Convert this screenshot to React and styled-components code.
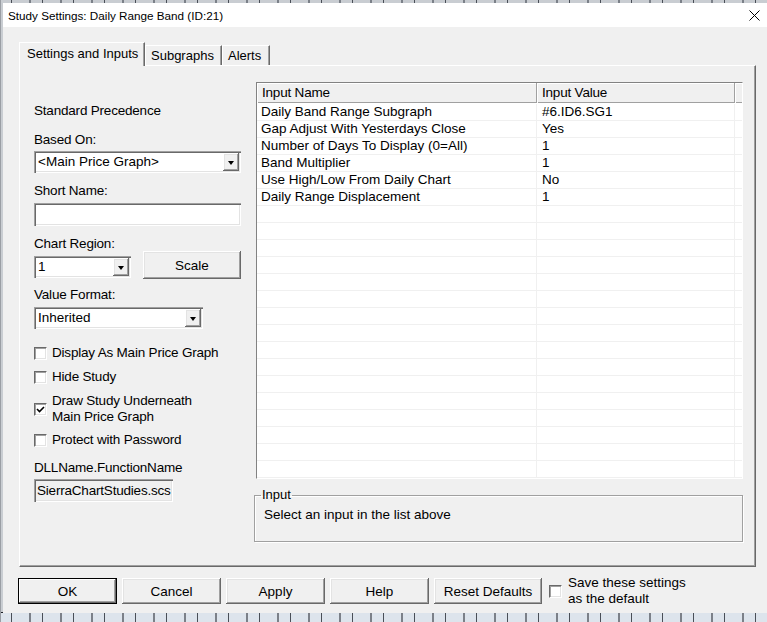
import React from 'react';
import styled, { createGlobalStyle } from 'styled-components';

const inputs = [
  ['Daily Band Range Subgraph', '#6.ID6.SG1'],
  ['Gap Adjust With Yesterdays Close', 'Yes'],
  ['Number of Days To Display (0=All)', '1'],
  ['Band Multiplier', '1'],
  ['Use High/Low From Daily Chart', 'No'],
  ['Daily Range Displacement', '1'],
];

const emptyRows = Array.from({ length: 18 }, () => ['', '']);

const App = () => (
  <Screen>
    <GlobalStyle />
    <Window>
      <TitleBar>
        <Title>Study Settings: Daily Range Band (ID:21)</Title>
        <Close viewBox="0 0 11 11" width="11" height="11">
          <path d="M0.5 0.5 L10.5 10.5 M10.5 0.5 L0.5 10.5" stroke="#000" strokeWidth="1" fill="none" />
        </Close>
      </TitleBar>
      <Body>
        <Tabs>
          <Tab active width={126}>Settings and Inputs</Tab>
          <Tab width={77}>Subgraphs</Tab>
          <Tab width={48}>Alerts</Tab>
        </Tabs>
        <Panel>
          <LeftCol>
            <Label mt={21}>Standard Precedence</Label>
            <Label mt={13}>Based On:</Label>
            <Select mt={3} width={207}>
              <SelectText>&lt;Main Price Graph&gt;</SelectText>
              <DropButton><Arrow /></DropButton>
            </Select>
            <Label mt={10}>Short Name:</Label>
            <TextBox mt={4} width={207} />
            <Label mt={10}>Chart Region:</Label>
            <Row>
              <Select mt={5} width={97}>
                <SelectText>1</SelectText>
                <DropButton><Arrow /></DropButton>
              </Select>
              <Button width={98} height={28}>Scale</Button>
            </Row>
            <Label mt={8}>Value Format:</Label>
            <Select mt={4} width={169}>
              <SelectText>Inherited</SelectText>
              <DropButton><Arrow /></DropButton>
            </Select>
            <Check mt={16}><Box /><span>Display As Main Price Graph</span></Check>
            <Check mt={8}><Box /><span>Hide Study</span></Check>
            <Check mt={8}>
              <Box><Tick viewBox="0 0 9 9" width="9" height="9"><path d="M1 4 L3.5 6.5 L8 2" stroke="#000" strokeWidth="1.6" fill="none" /></Tick></Box>
              <span>Draw Study Underneath<br />Main Price Graph</span>
            </Check>
            <Check mt={7}><Box /><span>Protect with Password</span></Check>
            <Label mt={12}>DLLName.FunctionName</Label>
            <TextBox mt={3} width={139} readOnlyLook>SierraChartStudies.scs</TextBox>
          </LeftCol>
          <RightCol>
            <Table>
              <HeadRow>
                <HeadCell>Input Name</HeadCell>
                <HeadCell>Input Value</HeadCell>
                <HeadCell />
              </HeadRow>
              <Rows>
                {[...inputs, ...emptyRows].map(([name, value], i) => (
                  <DataRow key={i}>
                    <Cell pad={4}>{name}</Cell>
                    <Cell pad={5}>{value}</Cell>
                    <Cell />
                  </DataRow>
                ))}
              </Rows>
            </Table>
            <Group>
              <Legend>Input</Legend>
              <GroupText>Select an input in the list above</GroupText>
            </Group>
          </RightCol>
        </Panel>
        <Footer>
          <Button width={99} height={26} isDefault>OK</Button>
          <Button width={99} height={26}>Cancel</Button>
          <Button width={99} height={26}>Apply</Button>
          <Button width={99} height={26}>Help</Button>
          <Button width={108} height={26}>Reset Defaults</Button>
          <FooterCheck><Box /><span>Save these settings<br />as the default</span></FooterCheck>
        </Footer>
      </Body>
    </Window>
  </Screen>
);

export default App;

const GlobalStyle = createGlobalStyle`
  html, body { margin:0; padding:0; }
  body {
    width:767px; height:622px; overflow:hidden;
    font-family:"Liberation Sans", Arial, sans-serif; font-size:13.5px; color:#000;
  }
`;

const sunken = `
  box-shadow: inset 1px 1px 0 #a0a0a0, inset 2px 2px 0 #696969, inset -1px -1px 0 #fff, inset -2px -2px 0 #e3e3e3;
`;
const raised = `
  box-shadow: inset -1px -1px 0 #696969, inset 1px 1px 0 #fff, inset -2px -2px 0 #a0a0a0, inset 2px 2px 0 #e3e3e3;
`;

const Screen = styled.div`
  width:767px; height:622px; box-sizing:border-box;
  padding:3px 0 9px 3px; display:flex;
  background:
    repeating-linear-gradient(90deg, transparent 0 11px, #4a4f57 11px 12px, transparent 12px 29px, #7b8088 29px 31px),
    linear-gradient(90deg, #9a9ea4 0 1px, transparent 1px),
    linear-gradient(#c9cdd2, #c9cdd2 612px, #1d2026 612px 613px, #dde4ec 613px);
`;
const Window = styled.div`
  flex:1; display:flex; flex-direction:column; background:#f0f0f0;
`;
const TitleBar = styled.div`
  height:24px; background:#fff; display:flex; align-items:center; justify-content:space-between;
  padding:0 7px 0 5px;
`;
const Title = styled.span`
  font-size:11.7px;
`;
const Close = styled.svg`
  display:block;
`;
const Body = styled.div`
  flex:1; display:flex; flex-direction:column; padding:15px 11px 9px 16px;
`;
const Tabs = styled.div`
  height:23px; display:flex; align-items:flex-end;
`;
const Tab = styled.div`
  width:${p => p.width}px; height:${p => (p.active ? 24 : 20)}px; box-sizing:border-box;
  margin-bottom:${p => (p.active ? -1 : 0)}px; position:relative; z-index:${p => (p.active ? 1 : 0)};
  padding:${p => (p.active ? '3px 0 0 7px' : '2px 0 0 5px')};
  font-size:13px; line-height:16px; white-space:nowrap; background:#f0f0f0;
  border-top:1px solid #fff; border-left:1px solid #fff; border-right:1px solid #696969;
  box-shadow: inset -1px 0 0 #a0a0a0;
`;
const Panel = styled.div`
  flex:1; display:flex; gap:15px; box-sizing:border-box;
  padding:16px 12px 0 14px;
  border-top:1px solid #fff; border-left:1px solid #fff;
  border-right:1px solid #696969; border-bottom:1px solid #696969;
  box-shadow: inset -1px -1px 0 #a0a0a0;
`;
const LeftCol = styled.div`
  width:207px; display:flex; flex-direction:column; align-items:flex-start;
`;
const Label = styled.div`
  margin-top:${p => p.mt}px; line-height:16px; white-space:nowrap; letter-spacing:-0.2px;
`;
const Select = styled.div`
  margin-top:${p => p.mt}px; width:${p => p.width}px; height:22px; box-sizing:border-box;
  background:#fff; display:flex; align-items:stretch; padding:2px; ${sunken}
`;
const SelectText = styled.div`
  flex:1; padding-left:2px; line-height:18px; white-space:nowrap; overflow:hidden;
`;
const DropButton = styled.div`
  width:16px; background:#f0f0f0; display:flex; align-items:center; justify-content:center; ${raised}
`;
const Arrow = styled.div`
  width:0; height:0; border-left:3.5px solid transparent; border-right:3.5px solid transparent;
  border-top:4px solid #000; margin-top:1px;
`;
const TextBox = styled.div`
  margin-top:${p => p.mt}px; width:${p => p.width}px; height:23px; box-sizing:border-box;
  background:${p => (p.readOnlyLook ? '#f0f0f0' : '#fff')}; ${sunken}
  padding:0 3px; line-height:23px; white-space:nowrap; overflow:hidden; letter-spacing:-0.2px;
`;
const Row = styled.div`
  width:100%; display:flex; justify-content:space-between; align-items:flex-start;
  margin-top:-1px;
`;
const Button = styled.div`
  width:${p => p.width}px; height:${p => p.height}px; box-sizing:border-box; flex:none;
  display:flex; align-items:center; justify-content:center; background:#f0f0f0;
  ${raised}
  ${p => p.isDefault && `
    border:1px solid #000;
    box-shadow: inset -1px -1px 0 #696969, inset 1px 1px 0 #fff, inset -2px -2px 0 #a0a0a0;
  `}
`;
const Check = styled.div`
  margin-top:${p => p.mt}px; display:flex; align-items:center; gap:5px; line-height:16px;
  letter-spacing:-0.2px;
`;
const Box = styled.div`
  width:13px; height:13px; box-sizing:border-box; flex:none; background:#fff;
  border:1px solid; border-color:#696969 #fff #fff #696969;
  box-shadow: inset 1px 1px 0 #a0a0a0, inset -1px -1px 0 #e3e3e3;
  display:flex; align-items:center; justify-content:center;
`;
const Tick = styled.svg`
  display:block;
`;
const RightCol = styled.div`
  flex:1; display:flex; flex-direction:column;
`;
const Table = styled.div`
  height:397px; box-sizing:border-box; background:#fff; overflow:hidden;
  border:1px solid; border-color:#828282 #fff #fff #828282;
`;
const cols = 'grid-template-columns:280px 198px 1fr;';
const HeadRow = styled.div`
  display:grid; ${cols} height:20px; box-sizing:border-box; background:#f0f0f0;
  border-bottom:1px solid #a0a0a0;
`;
const HeadCell = styled.div`
  border-right:1px solid #a0a0a0; box-shadow: inset 1px 1px 0 #fff;
  padding-left:5px; line-height:20px; letter-spacing:-0.2px;
  &:last-child { border-right:none; }
`;
const Rows = styled.div`
  padding-top:1px;
`;
const DataRow = styled.div`
  display:grid; ${cols} height:17px; box-sizing:border-box; border-bottom:1px solid #f0f0f0;
`;
const Cell = styled.div`
  border-right:1px solid #f0f0f0; padding-left:${p => p.pad || 0}px; line-height:16px;
  white-space:nowrap; overflow:hidden;
  &:last-child { border-right:none; }
`;
const Group = styled.fieldset`
  margin:8px 0 0 -2px; padding:0 9px 0 9px; height:55px; box-sizing:border-box;
  border:1px solid #a0a0a0; box-shadow: inset 1px 1px 0 #fff, 1px 1px 0 #fff;
  min-width:0;
`;
const Legend = styled.legend`
  padding:0 1px; margin-left:-3px; font-size:13px; line-height:16px;
`;
const GroupText = styled.div`
  margin-top:4px; line-height:16px;
`;
const Footer = styled.div`
  margin-top:11px; height:26px; display:flex; align-items:center; gap:5px;
  margin-left:-1px;
`;
const FooterCheck = styled.div`
  display:flex; align-items:center; gap:6px; margin-left:2px; line-height:16px;
`;
